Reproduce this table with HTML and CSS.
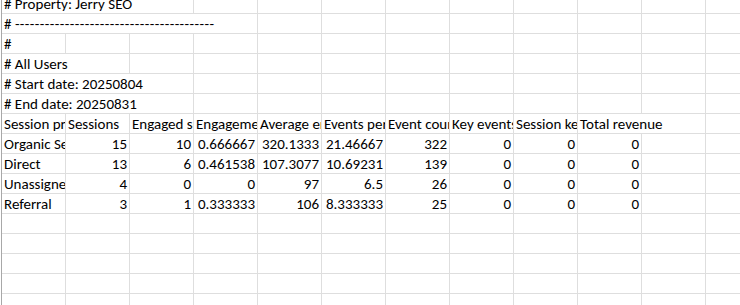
FILE: index.html
```html
<!DOCTYPE html>
<html>
<head>
<meta charset="utf-8">
<link rel="stylesheet" href="styles.css">
</head>
<body>
<div class="sheet">
  <div class="c s3">#&nbsp;Property: Jerry SEO</div><div class="c"></div><div class="c"></div><div class="c"></div><div class="c"></div><div class="c"></div><div class="c"></div><div class="c"></div><div class="c"></div><div class="c"></div>
  <div class="c s4"># <span class="dash">----------------------------------------</span></div><div class="c"></div><div class="c"></div><div class="c"></div><div class="c"></div><div class="c"></div><div class="c"></div><div class="c"></div><div class="c"></div>
  <div class="c">#</div><div class="c"></div><div class="c"></div><div class="c"></div><div class="c"></div><div class="c"></div><div class="c"></div><div class="c"></div><div class="c"></div><div class="c"></div><div class="c"></div><div class="c"></div>
  <div class="c s2"># All Users</div><div class="c"></div><div class="c"></div><div class="c"></div><div class="c"></div><div class="c"></div><div class="c"></div><div class="c"></div><div class="c"></div><div class="c"></div><div class="c"></div>
  <div class="c s3"># Start date: 20250804</div><div class="c"></div><div class="c"></div><div class="c"></div><div class="c"></div><div class="c"></div><div class="c"></div><div class="c"></div><div class="c"></div><div class="c"></div>
  <div class="c s3"># End date: 20250831</div><div class="c"></div><div class="c"></div><div class="c"></div><div class="c"></div><div class="c"></div><div class="c"></div><div class="c"></div><div class="c"></div><div class="c"></div>

  <div class="c">Session primary channel group (Default channel group)</div><div class="c">Sessions</div><div class="c">Engaged sessions</div><div class="c">Engagement rate</div><div class="c">Average engagement time per session</div><div class="c">Events per session</div><div class="c">Event count</div><div class="c">Key events</div><div class="c">Session key event rate</div><div class="c s2">Total revenue</div><div class="c"></div>

  <div class="c">Organic Search</div><div class="c n">15</div><div class="c n">10</div><div class="c n">0.666667</div><div class="c n">320.1333</div><div class="c n">21.46667</div><div class="c n">322</div><div class="c n">0</div><div class="c n">0</div><div class="c n">0</div><div class="c"></div><div class="c"></div>
  <div class="c">Direct</div><div class="c n">13</div><div class="c n">6</div><div class="c n">0.461538</div><div class="c n">107.3077</div><div class="c n">10.69231</div><div class="c n">139</div><div class="c n">0</div><div class="c n">0</div><div class="c n">0</div><div class="c"></div><div class="c"></div>
  <div class="c">Unassigned</div><div class="c n">4</div><div class="c n">0</div><div class="c n">0</div><div class="c n">97</div><div class="c n">6.5</div><div class="c n">26</div><div class="c n">0</div><div class="c n">0</div><div class="c n">0</div><div class="c"></div><div class="c"></div>
  <div class="c">Referral</div><div class="c n">3</div><div class="c n">1</div><div class="c n">0.333333</div><div class="c n">106</div><div class="c n">8.333333</div><div class="c n">25</div><div class="c n">0</div><div class="c n">0</div><div class="c n">0</div><div class="c"></div><div class="c"></div>

  <div class="c"></div><div class="c"></div><div class="c"></div><div class="c"></div><div class="c"></div><div class="c"></div><div class="c"></div><div class="c"></div><div class="c"></div><div class="c"></div><div class="c"></div><div class="c"></div>
  <div class="c"></div><div class="c"></div><div class="c"></div><div class="c"></div><div class="c"></div><div class="c"></div><div class="c"></div><div class="c"></div><div class="c"></div><div class="c"></div><div class="c"></div><div class="c"></div>
  <div class="c"></div><div class="c"></div><div class="c"></div><div class="c"></div><div class="c"></div><div class="c"></div><div class="c"></div><div class="c"></div><div class="c"></div><div class="c"></div><div class="c"></div><div class="c"></div>
  <div class="c"></div><div class="c"></div><div class="c"></div><div class="c"></div><div class="c"></div><div class="c"></div><div class="c"></div><div class="c"></div><div class="c"></div><div class="c"></div><div class="c"></div><div class="c"></div>
  <div class="c"></div><div class="c"></div><div class="c"></div><div class="c"></div><div class="c"></div><div class="c"></div><div class="c"></div><div class="c"></div><div class="c"></div><div class="c"></div><div class="c"></div><div class="c"></div>
</div>
</body>
</html>
```
FILE: styles.css
```css
html, body {
  margin: 0;
  padding: 0;
  background: #ffffff;
  overflow: hidden;
}
.sheet {
  display: grid;
  grid-template-columns: repeat(12, 64px);
  grid-auto-rows: 20px;
  margin-top: -6px;
  margin-left: 1px;
  border-left: 1px solid #a8a8a8;
  font-family: Carlito, Lato, "Liberation Sans", sans-serif;
  font-size: 15px;
  color: #000;
}
.c {
  box-sizing: border-box;
  border-right: 1px solid #dedede;
  border-bottom: 1px solid #dedede;
  padding: 1px 2px 0 2px;
  line-height: 18px;
  white-space: nowrap;
  overflow: hidden;
}
.n {
  text-align: right;
}
.dash {
  letter-spacing: 0.4px;
}
.s2 { grid-column: span 2; }
.s3 { grid-column: span 3; }
.s4 { grid-column: span 4; }
```
